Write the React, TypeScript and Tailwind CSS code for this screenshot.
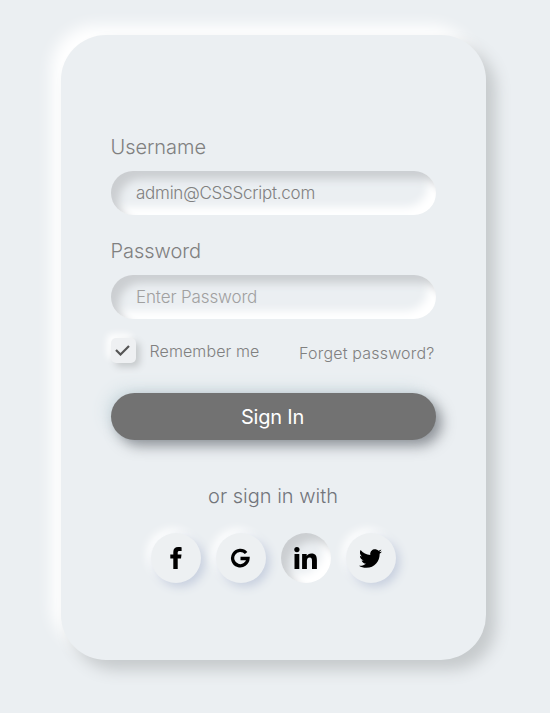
import { FaTwitter } from "react-icons/fa";

const raised =
  "bg-[#edf0f2] shadow-[4px_4px_10px_#c8d0df,-4px_-4px_10px_#ffffff]";
const pressed =
  "shadow-[inset_8px_8px_8px_#cbced1,inset_-8px_-8px_8px_#ffffff]";

function FacebookIcon() {
  return (
    <svg className="mr-px" width="12" height="22" viewBox="0 0 12 22" fill="#000">
      <path d="M11.6 0.2V3.9H9.6C8.1 3.9 7.7 4.6 7.7 5.6V7.6H11.5L11 11.4H7.7V22H3.3V11.4H0.3V7.6H3.3V5C3.3 1.8 5.2 0 8.2 0C9.8 0 11.1 0.1 11.6 0.2Z" />
    </svg>
  );
}

function GoogleIcon() {
  return (
    <svg className="mr-px" width="21" height="21" viewBox="0 0 21 21" fill="none" stroke="#000" strokeWidth="3.3">
      <path d="M16.1 5A7.7 7.7 0 1 0 18 10.5H10.5" />
    </svg>
  );
}

function LinkedInIcon() {
  return (
    <svg className="mr-px" width="23" height="22" viewBox="0 0 23 22" fill="#000">
      <circle cx="2.9" cy="2.6" r="2.6" />
      <path d="M0.5 7H5.3V22H0.5Z" />
      <path d="M8.1 7H12.7V9.1C13.5 7.7 15.1 6.6 17.3 6.6C21.7 6.6 22.9 9.3 22.9 13.2V22H18V14.2C18 12 17.6 10.6 15.7 10.6C13.6 10.6 12.9 12.1 12.9 14.2V22H8.1Z" />
    </svg>
  );
}

function Field({
  label,
  value,
  placeholder,
  type,
}: {
  label: string;
  value?: string;
  placeholder?: string;
  type: string;
}) {
  return (
    <label className="block">
      <span className="mb-3 -ml-[0.5px] block h-6 text-[20px] leading-6 tracking-[-0.05px] text-[#808080]">{label}</span>
      <input
        type={type}
        defaultValue={value}
        placeholder={placeholder}
        className={`block h-11 w-full rounded-full bg-transparent px-[25px] text-[17px] tracking-[-0.25px] text-[#808080] outline-none placeholder:tracking-[-0.13px] placeholder:text-[#a0a0a0] ${pressed}`}
      />
    </label>
  );
}

export default function App() {
  return (
    <main className="flex h-[713px] w-[550px] bg-[#ebeff2] pt-[35px] pl-[61px] font-['Inter',sans-serif] font-light">
      <form className="h-[625px] w-[425px] rounded-[45px] px-[50px] pt-[100px] shadow-[10px_10px_15px_#c6cacc,-10px_-10px_15px_#ffffff]">
        <div className="flex flex-col gap-6">
          <Field label="Username" type="text" value="admin@CSSScript.com" />
          <Field label="Password" type="text" placeholder="Enter Password" />
        </div>

        <div className="mt-[19px] flex h-[25px] items-center text-[16px] text-[#808080]">
          <span className="flex size-[25px] items-center justify-center rounded-[5px] bg-[#eef0f2] shadow-[4px_4px_7px_#c6cacc,-4px_-4px_7px_#ffffff]">
            <svg className="mr-[2px]" width="15" height="11" viewBox="0 0 15 11" fill="none" stroke="#555" strokeWidth="2.2">
              <path d="M1 5l4.5 4.5L14 1" />
            </svg>
          </span>
          <span className="ml-[13.5px] tracking-[0.1px]">Remember me</span>
          <a className="mt-1 mr-[1.5px] ml-auto tracking-[0.19px]">Forget password?</a>
        </div>

        <button
          type="button"
          className="mt-[30px] block h-[47px] w-full rounded-full bg-[#727272] pr-[2px] text-[20px] font-normal tracking-[-0.2px] text-white shadow-[6px_6px_13px_rgba(55,60,68,0.5),-5px_-5px_15px_#d5e1e6]"
        >
          Sign In
        </button>

        <p className="mt-[44px] -ml-px text-center text-[20px] leading-6 text-[#72757b]">or sign in with</p>

        <div className="mt-[25px] flex justify-center gap-[15px] text-black">
          <a className={`flex size-[50px] items-center justify-center rounded-full ${raised}`}>
            <FacebookIcon />
          </a>
          <a className={`flex size-[50px] items-center justify-center rounded-full ${raised}`}>
            <GoogleIcon />
          </a>
          <a className={`flex size-[50px] items-center justify-center rounded-full ${pressed}`}>
            <LinkedInIcon />
          </a>
          <a className={`flex size-[50px] items-center justify-center rounded-full ${raised}`}>
            <FaTwitter size={23} className="mr-px" />
          </a>
        </div>
      </form>
    </main>
  );
}
